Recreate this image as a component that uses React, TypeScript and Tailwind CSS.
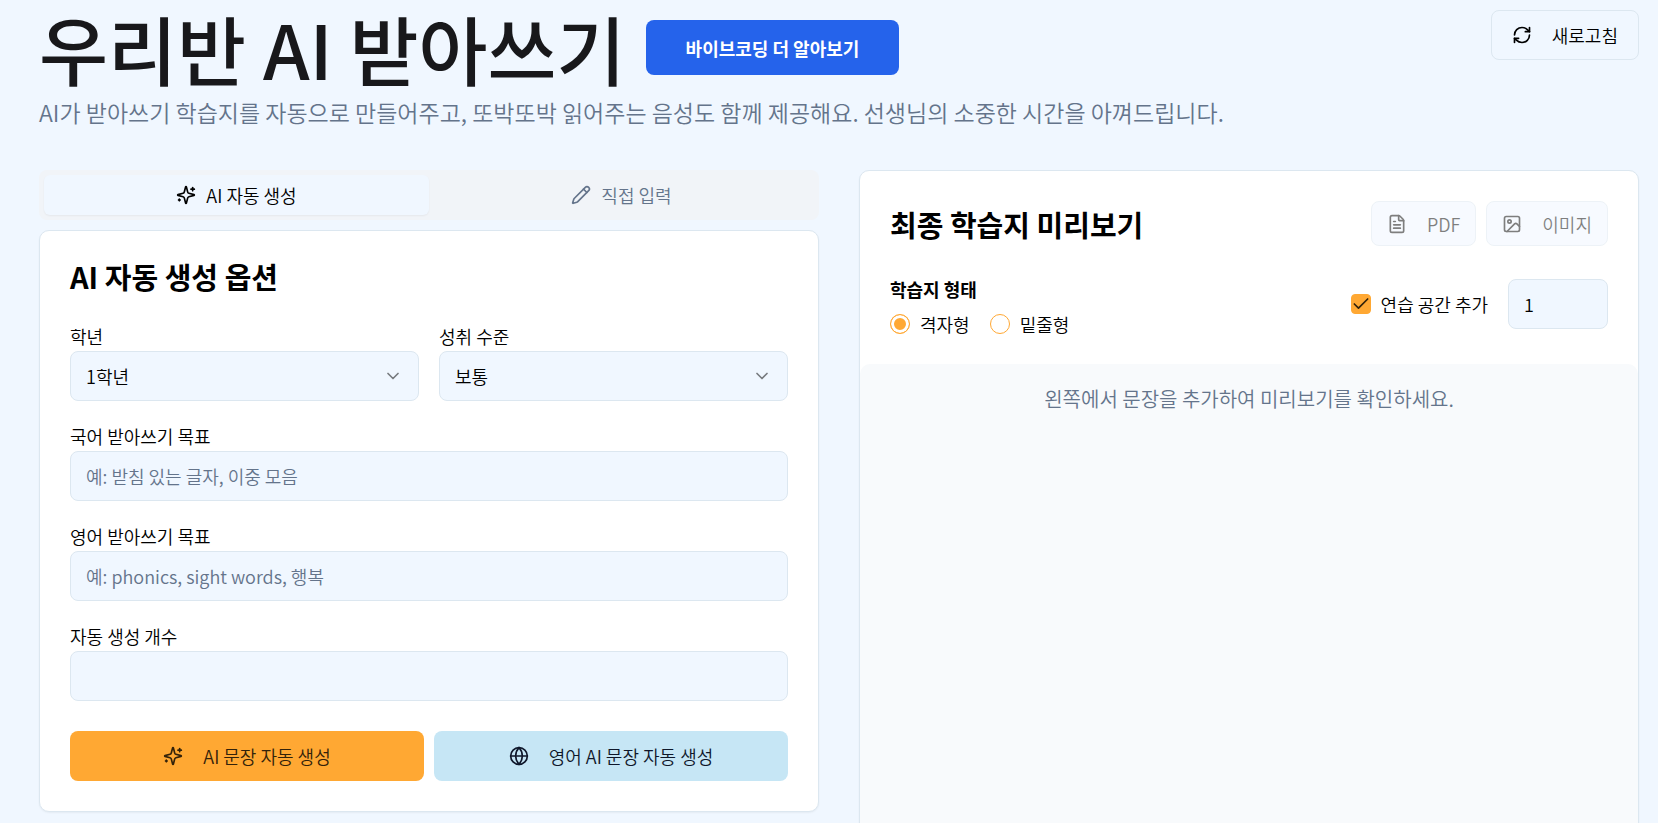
import { useState } from "react";
import type { ButtonHTMLAttributes, InputHTMLAttributes, SelectHTMLAttributes } from "react";
import { Check, ChevronDown, FileText, Globe, Image, Pencil, RefreshCw } from "lucide-react";
import { cva } from "class-variance-authority";
import { clsx } from "clsx";

const button = cva(
  "inline-flex items-center justify-center gap-5 rounded-lg text-lg whitespace-nowrap disabled:opacity-50",
  {
    variants: {
      variant: {
        outline: "border border-[#dce7f0] bg-[#f0f7ff] text-black",
        primary: "bg-[#ffa833] text-[#33220a]",
        secondary: "bg-[#c6e6f5] text-[#0f172a]",
      },
      size: {
        sm: "h-[45px] px-[15px]",
        md: "h-[50px] px-5",
      },
    },
    defaultVariants: { variant: "outline", size: "md" },
  }
);

type ButtonProps = ButtonHTMLAttributes<HTMLButtonElement> & {
  variant?: "outline" | "primary" | "secondary";
  size?: "sm" | "md";
};

function Button({ variant, size, className, ...props }: ButtonProps) {
  return <button type="button" className={clsx(button({ variant, size }), className)} {...props} />;
}

function SparklesIcon() {
  return (
    <svg
      className="size-5 shrink-0"
      viewBox="0 0 24 24"
      fill="none"
      stroke="currentColor"
      strokeWidth="2"
      strokeLinecap="round"
      strokeLinejoin="round"
      aria-hidden="true"
    >
      <path d="M9.937 15.5A2 2 0 0 0 8.5 14.063l-6.135-1.582a.5.5 0 0 1 0-.962L8.5 9.936A2 2 0 0 0 9.937 8.5l1.582-6.135a.5.5 0 0 1 .963 0L14.063 8.5A2 2 0 0 0 15.5 9.937l6.135 1.581a.5.5 0 0 1 0 .964L15.5 14.063a2 2 0 0 0-1.437 1.437l-1.582 6.135a.5.5 0 0 1-.963 0z" />
      <path d="M20 3v4" />
      <path d="M22 5h-4" />
      <path d="M4 17v2" />
      <path d="M5 18H3" />
    </svg>
  );
}

const fieldClass =
  "h-[50px] w-full rounded-lg border border-[#dce7f0] bg-[#f0f7ff] px-[15px] text-lg text-black";

function TextField({ id, label, ...props }: InputHTMLAttributes<HTMLInputElement> & { id: string; label: string }) {
  return (
    <div>
      <label htmlFor={id} className="block text-lg leading-[30px] text-black">{label}</label>
      <input id={id} className={clsx(fieldClass, "placeholder:text-[#64748b]")} {...props} />
    </div>
  );
}

function SelectField({ id, label, children, ...props }: SelectHTMLAttributes<HTMLSelectElement> & { id: string; label: string }) {
  return (
    <div>
      <label htmlFor={id} className="block text-lg leading-[30px] text-black">{label}</label>
      <div className="relative">
        <select id={id} className={clsx(fieldClass, "appearance-none")} {...props}>
          {children}
        </select>
        <ChevronDown className="pointer-events-none absolute top-[15px] right-4 size-5 text-black opacity-50" />
      </div>
    </div>
  );
}

const sheetTypes = [
  { value: "grid", label: "격자형" },
  { value: "underline", label: "밑줄형" },
];

export default function App() {
  const [tab, setTab] = useState("ai");
  const [sheetType, setSheetType] = useState("grid");
  const [practice, setPractice] = useState(true);

  const tabClass = (value: string) =>
    clsx(
      "flex h-10 items-center justify-center gap-[10px] rounded-md text-lg",
      tab === value ? "bg-[#f0f7ff] text-black shadow-xs" : "text-[#64748b]"
    );

  return (
    <div className="min-h-screen bg-[#f0f7ff] pt-[10px] pr-[19px] pb-10 pl-[39px] font-['Noto_Sans_CJK_KR','Noto_Sans',sans-serif] font-[350]">
      {/* Header */}
      <header className="flex items-start justify-between">
        <div>
          <div className="flex items-center gap-5">
            <h1 className="text-[75px] leading-[75px] font-medium text-[#18181b]">우리반 AI 받아쓰기</h1>
            <a
              href="#vibe-coding"
              className="flex h-[55px] items-center rounded-lg bg-[#2563eb] px-10 text-lg font-bold text-white"
            >
              바이브코딩 더 알아보기
            </a>
          </div>
          <p className="mt-[11px] text-[23px] leading-8 text-[#64748b]">
            AI가 받아쓰기 학습지를 자동으로 만들어주고, 또박또박 읽어주는 음성도 함께 제공해요. 선생님의 소중한 시간을 아껴드립니다.
          </p>
        </div>
        <Button>
          <RefreshCw className="size-5" />
          새로고침
        </Button>
      </header>

      <main className="mt-[42px] grid grid-cols-2 items-start gap-10">
        {/* Generation options */}
        <div>
          <div role="tablist" className="grid grid-cols-2 rounded-lg bg-[#f1f4f8] p-[5px]">
            <button type="button" role="tab" aria-selected={tab === "ai"} className={tabClass("ai")} onClick={() => setTab("ai")}>
              <SparklesIcon />
              AI 자동 생성
            </button>
            <button type="button" role="tab" aria-selected={tab === "manual"} className={tabClass("manual")} onClick={() => setTab("manual")}>
              <Pencil className="size-5" />
              직접 입력
            </button>
          </div>

          <section className="mt-[10px] rounded-[10px] border border-[#dce7f0] bg-white p-[30px] shadow-xs">
            <h2 className="text-[29px] leading-[30px] font-semibold text-black">AI 자동 생성 옵션</h2>
            <form className="mt-[30px] space-y-5">
              <div className="grid grid-cols-2 gap-5">
                <SelectField id="grade" label="학년" defaultValue="1">
                  <option value="1">1학년</option>
                  <option value="2">2학년</option>
                  <option value="3">3학년</option>
                </SelectField>
                <SelectField id="level" label="성취 수준" defaultValue="normal">
                  <option value="low">기초</option>
                  <option value="normal">보통</option>
                  <option value="high">심화</option>
                </SelectField>
              </div>
              <TextField id="korean-goal" label="국어 받아쓰기 목표" placeholder="예: 받침 있는 글자, 이중 모음" />
              <TextField id="english-goal" label="영어 받아쓰기 목표" placeholder="예: phonics, sight words, 행복" />
              <TextField id="count" label="자동 생성 개수" inputMode="numeric" />
              <div className="grid grid-cols-2 gap-[10px] pt-[10px]">
                <Button variant="primary">
                  <SparklesIcon />
                  AI 문장 자동 생성
                </Button>
                <Button variant="secondary">
                  <Globe className="size-5" />
                  영어 AI 문장 자동 생성
                </Button>
              </div>
            </form>
          </section>
        </div>

        {/* Worksheet preview */}
        <section className="rounded-[10px] border border-[#dce7f0] bg-white shadow-xs">
          <div className="p-[30px]">
            <div className="flex items-center justify-between">
              <h2 className="text-[29px] leading-[30px] font-semibold text-black">최종 학습지 미리보기</h2>
              <div className="flex gap-[10px]">
                <Button size="sm" disabled>
                  <FileText className="size-5" />
                  PDF
                </Button>
                <Button size="sm" disabled>
                  <Image className="size-5" />
                  이미지
                </Button>
              </div>
            </div>

            <div className="mt-7 flex items-center justify-between">
              <fieldset>
                <legend className="text-lg leading-[30px] font-semibold text-black">학습지 형태</legend>
                <div className="mt-[10px] flex gap-5">
                  {sheetTypes.map((type) => (
                    <label key={type.value} className="flex items-center gap-[10px] text-lg leading-5 text-black">
                      <input
                        type="radio"
                        name="sheet-type"
                        value={type.value}
                        checked={sheetType === type.value}
                        onChange={() => setSheetType(type.value)}
                        className="size-5 appearance-none rounded-full border border-[#ffa833] bg-white checked:bg-[#ffa833] checked:inset-ring-3 checked:inset-ring-white"
                      />
                      {type.label}
                    </label>
                  ))}
                </div>
              </fieldset>

              <div className="flex items-center gap-5">
                <label className="flex items-center gap-[10px] text-lg text-black">
                  <span className="relative size-5">
                    <input
                      type="checkbox"
                      checked={practice}
                      onChange={(e) => setPractice(e.target.checked)}
                      className="block size-5 appearance-none rounded border border-[#ffa833] checked:bg-[#ffa833]"
                    />
                    {practice && (
                      <Check className="pointer-events-none absolute inset-0 size-5 text-[#33220a]" />
                    )}
                  </span>
                  연습 공간 추가
                </label>
                <div className="w-[100px]">
                  <input aria-label="연습 줄 수" inputMode="numeric" defaultValue="1" className={fieldClass} />
                </div>
              </div>
            </div>
          </div>

          <div className="min-h-[600px] rounded-[10px] bg-[#f8fafc] p-5">
            <p className="text-center text-xl leading-[30px] text-[#64748b]">왼쪽에서 문장을 추가하여 미리보기를 확인하세요.</p>
          </div>
        </section>
      </main>
    </div>
  );
}
